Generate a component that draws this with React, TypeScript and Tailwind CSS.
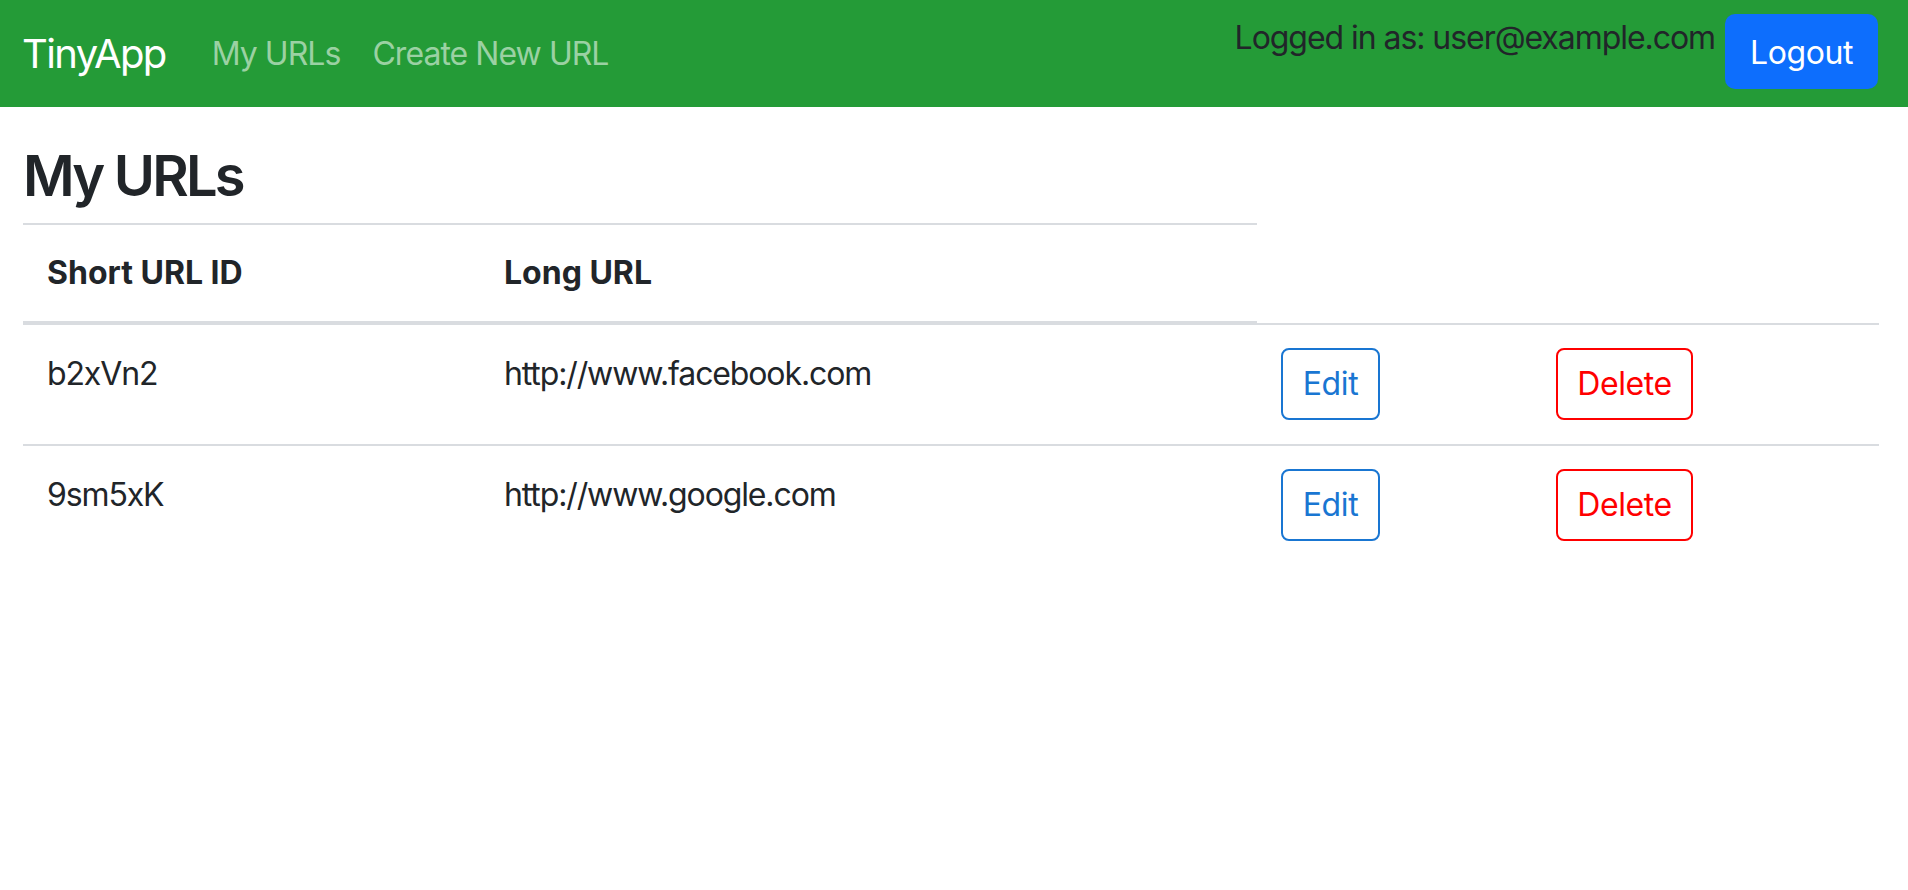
const urls = [
  { id: "b2xVn2", longURL: "http://www.facebook.com" },
  { id: "9sm5xK", longURL: "http://www.google.com" },
];

function Navbar() {
  return (
    <nav className="flex h-[107px] justify-between bg-[#249b37] pl-[22px] pr-[30px]">
      <div className="flex items-center">
        <a className="mr-[46px] text-[40px] leading-[60px] tracking-[-0.04em] text-white">TinyApp</a>
        <a className="mr-[32px] text-[32px] leading-[48px] tracking-[-0.03em] text-[#9bd1a3]">My URLs</a>
        <a className="text-[32px] leading-[48px] tracking-[-0.03em] text-[#9bd1a3]">Create New URL</a>
      </div>
      <div className="flex items-start pt-[14px]">
        <span className="text-[32px] leading-[48px] tracking-[-0.033em] text-[#212529]">
          Logged in as: user@example.com
        </span>
        <button className="ml-[10px] h-[75px] w-[153px] rounded-[10px] bg-[#0d6efd] pt-[3px] text-[32px] text-white">
          Logout
        </button>
      </div>
    </nav>
  );
}

export default function App() {
  return (
    <div className="min-h-screen bg-white font-['Inter',sans-serif] tracking-[-0.025em] text-[#212529]">
      <Navbar />
      <main className="px-[23px]">
        <h3 className="mt-[36px] mb-[13px] text-[56px] font-semibold leading-[67px] tracking-[-0.05em]">
          My URLs
        </h3>
        <div className="w-[1856px]">
          {/* header row only covers the first two columns */}
          <div className="flex w-[1234px] border-t-2 border-b-2 border-[#d9dce0] text-[32px] font-bold leading-[48px] tracking-normal">
            <div className="w-[457px] px-[24px] py-[24px]">Short URL ID</div>
            <div className="w-[777px] px-[24px] py-[24px]">Long URL</div>
          </div>
          {urls.map((url) => (
            <div key={url.id} className="flex border-t-2 border-[#d9dce0] text-[32px] leading-[48px]">
              <div className="w-[457px] px-[24px] pt-[25px] pb-[24px] tracking-[-0.035em]">{url.id}</div>
              <div className="w-[777px] px-[24px] pt-[25px] pb-[24px] tracking-[-0.035em]">{url.longURL}</div>
              <div className="w-[275px] px-[24px] pt-[23px] pb-[24px]">
                <button className="h-[72px] w-[99px] rounded-[8px] border-2 border-[#1976d2] text-[#1976d2]">
                  Edit
                </button>
              </div>
              <div className="w-[347px] px-[24px] pt-[23px] pb-[24px]">
                <button className="h-[72px] w-[137px] rounded-[8px] border-2 border-[#ff0000] text-[#ff0000]">
                  Delete
                </button>
              </div>
            </div>
          ))}
        </div>
      </main>
    </div>
  );
}
